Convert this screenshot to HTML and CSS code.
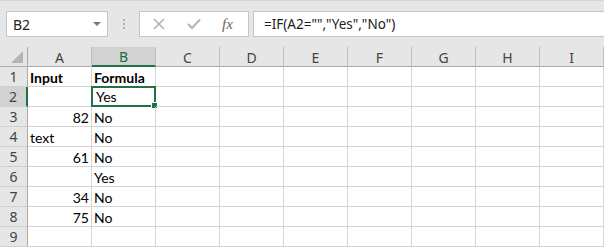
FILE: index.html
```html
<!DOCTYPE html>
<html lang="en">
<head>
    <meta charset="UTF-8">
    <title>IF blank - Excel</title>
    <link rel="stylesheet" href="styles.css">
</head>
<body>
    <!-- Name box and formula bar -->
    <div class="toolbar">
        <div class="namebox">
            <span>B2</span>
            <span class="caret"></span>
        </div>
        <div class="grip"><i></i><i></i><i></i></div>
        <div class="fxbox">
            <svg class="tool-icon" width="12" height="12" viewBox="0 0 12 12">
                <path d="M1 1 L11 11 M11 1 L1 11" stroke="#b4b4b4" stroke-width="1.6" fill="none"/>
            </svg>
            <svg class="tool-icon" width="14" height="12" viewBox="0 0 14 12">
                <path d="M1 6 L5 10 L13 1.5" stroke="#b4b4b4" stroke-width="2" fill="none"/>
            </svg>
            <span class="fx">fx</span>
        </div>
        <div class="formula">=IF(A2="","Yes","No")</div>
    </div>

    <!-- Worksheet grid -->
    <div class="sheet">
        <div class="corner"><span class="tri"></span></div>
        <div class="colhead">A</div>
        <div class="colhead active">B</div>
        <div class="colhead">C</div>
        <div class="colhead">D</div>
        <div class="colhead">E</div>
        <div class="colhead">F</div>
        <div class="colhead">G</div>
        <div class="colhead">H</div>
        <div class="colhead">I</div>

        <div class="rowhead">1</div>
        <div class="cell bold">Input</div><div class="cell bold">Formula</div>
        <div class="cell"></div><div class="cell"></div><div class="cell"></div><div class="cell"></div><div class="cell"></div><div class="cell"></div><div class="cell"></div>

        <div class="rowhead active">2</div>
        <div class="cell"></div><div class="cell selected">Yes<span class="handle"></span></div>
        <div class="cell"></div><div class="cell"></div><div class="cell"></div><div class="cell"></div><div class="cell"></div><div class="cell"></div><div class="cell"></div>

        <div class="rowhead">3</div>
        <div class="cell num">82</div><div class="cell">No</div>
        <div class="cell"></div><div class="cell"></div><div class="cell"></div><div class="cell"></div><div class="cell"></div><div class="cell"></div><div class="cell"></div>

        <div class="rowhead">4</div>
        <div class="cell">text</div><div class="cell">No</div>
        <div class="cell"></div><div class="cell"></div><div class="cell"></div><div class="cell"></div><div class="cell"></div><div class="cell"></div><div class="cell"></div>

        <div class="rowhead">5</div>
        <div class="cell num">61</div><div class="cell">No</div>
        <div class="cell"></div><div class="cell"></div><div class="cell"></div><div class="cell"></div><div class="cell"></div><div class="cell"></div><div class="cell"></div>

        <div class="rowhead">6</div>
        <div class="cell"></div><div class="cell">Yes</div>
        <div class="cell"></div><div class="cell"></div><div class="cell"></div><div class="cell"></div><div class="cell"></div><div class="cell"></div><div class="cell"></div>

        <div class="rowhead">7</div>
        <div class="cell num">34</div><div class="cell">No</div>
        <div class="cell"></div><div class="cell"></div><div class="cell"></div><div class="cell"></div><div class="cell"></div><div class="cell"></div><div class="cell"></div>

        <div class="rowhead">8</div>
        <div class="cell num">75</div><div class="cell">No</div>
        <div class="cell"></div><div class="cell"></div><div class="cell"></div><div class="cell"></div><div class="cell"></div><div class="cell"></div><div class="cell"></div>

        <div class="rowhead">9</div>
        <div class="cell"></div><div class="cell"></div>
        <div class="cell"></div><div class="cell"></div><div class="cell"></div><div class="cell"></div><div class="cell"></div><div class="cell"></div><div class="cell"></div>
    </div>
</body>
</html>
```

FILE: styles.css
```css
/* Page */
body {
    margin: 0;
    width: 604px;
    height: 247px;
    overflow: hidden;
    background-color: #e6e6e6;
    font-family: 'Noto Sans', 'Liberation Sans', sans-serif;
    color: #000;
}

/* Formula bar strip */
.toolbar {
    display: flex;
    align-items: center;
    height: 26px;
    padding: 10px 0 10px 6px;
    border-top: 1px solid #d6d6d6;
}

.namebox {
    box-sizing: border-box;
    width: 102px;
    height: 26px;
    display: flex;
    align-items: center;
    justify-content: space-between;
    padding: 0 6px 0 6px;
    background-color: #fff;
    border: 1px solid #c6c6c6;
    font-size: 14px;
    color: #222;
}

.caret {
    width: 0;
    height: 0;
    border-left: 4px solid transparent;
    border-right: 4px solid transparent;
    border-top: 4px solid #777;
}

.grip {
    width: 2px;
    margin: 0 14px 0 15px;
    display: flex;
    flex-direction: column;
    gap: 2px;
}

.grip i {
    display: block;
    width: 2px;
    height: 2px;
    background-color: #b0b0b0;
}

.fxbox {
    box-sizing: border-box;
    width: 110px;
    height: 26px;
    display: flex;
    align-items: center;
    padding-left: 13px;
    background-color: #fff;
    border: 1px solid #c6c6c6;
}

.tool-icon {
    margin-right: 22px;
}

.fx {
    margin-left: -1px;
    font-family: 'Liberation Serif', serif;
    font-style: italic;
    font-size: 15px;
    color: #666;
}

.formula {
    box-sizing: border-box;
    flex: 1;
    height: 26px;
    margin-left: 4px;
    margin-right: -2px;
    padding-left: 10px;
    line-height: 24px;
    background-color: #fff;
    border: 1px solid #c6c6c6;
    font-size: 13.5px;
    color: #222;
}

/* Worksheet */
.sheet {
    display: grid;
    grid-template-columns: 28px repeat(9, 64px);
    grid-auto-rows: 20px;
    background-color: #fff;
}

.corner,
.colhead,
.rowhead {
    box-sizing: border-box;
    background-color: #e6e6e6;
    display: flex;
    align-items: center;
    justify-content: center;
    font-size: 14px;
    color: #444;
}

.corner {
    position: relative;
    border-right: 1px solid #ababab;
    border-bottom: 1px solid #ababab;
}

.tri {
    position: absolute;
    right: 4px;
    bottom: 3px;
    width: 0;
    height: 0;
    border-left: 12px solid transparent;
    border-bottom: 12px solid #b4b4b4;
}

.colhead {
    border-right: 1px solid #bdbdbd;
    border-bottom: 1px solid #ababab;
    padding-top: 1px;
}

.colhead.active {
    background-color: #d2d2d2;
    border-bottom: 2px solid #217346;
    color: #1c6a3f;
}

.rowhead {
    border-right: 1px solid #ababab;
    border-bottom: 1px solid #d0d0d0;
}

.rowhead.active {
    background-color: #d2d2d2;
    border-right: 2px solid #217346;
}

.cell {
    box-sizing: border-box;
    position: relative;
    padding: 1px 3px 0 2px;
    border-right: 1px solid #d4d4d4;
    border-bottom: 1px solid #d4d4d4;
    font-family: 'Lato', 'Liberation Sans', sans-serif;
    font-size: 14px;
    line-height: 19px;
    white-space: nowrap;
}

.cell.bold {
    font-weight: bold;
}

.cell.num {
    text-align: right;
    padding-right: 2px;
}

.cell.selected {
    margin: -1px 0 0 -1px;
    padding: 0 0 0 3px;
    border: 2px solid #217346;
    line-height: 18px;
}

.handle {
    position: absolute;
    right: -4px;
    bottom: -4px;
    width: 5px;
    height: 5px;
    background-color: #217346;
    border: 1px solid #fff;
}
```
